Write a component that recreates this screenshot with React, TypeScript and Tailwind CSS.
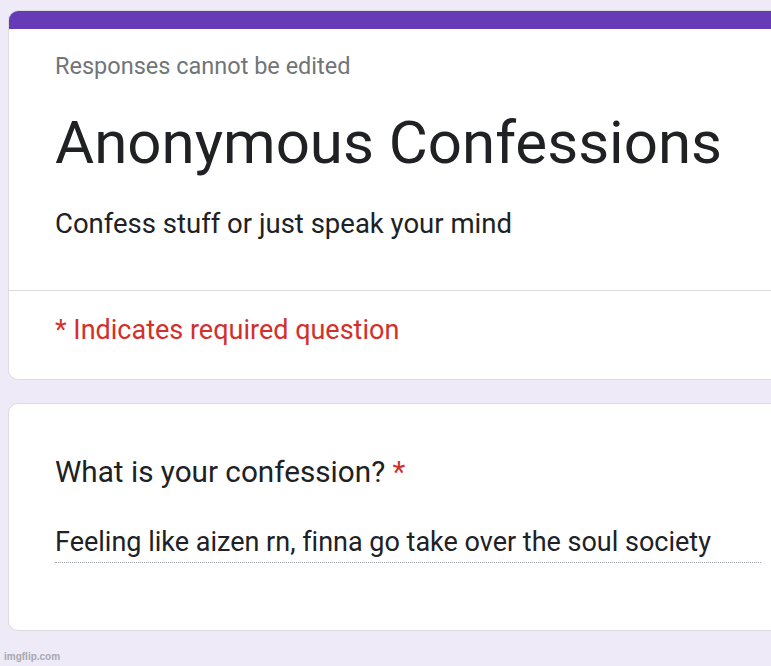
export default function App() {
  return (
    <div
      className="relative h-[666px] w-[771px] overflow-hidden bg-[#eeeaf8] pt-[10px] pl-[8px]"
      style={{ fontFamily: "Roboto, 'Liberation Sans', sans-serif" }}
    >
      {/* Header card */}
      <div className="w-[800px] overflow-hidden rounded-l-[10px] border border-[#dadce0] bg-white">
        <div className="h-[18px] bg-[#673ab7]" />
        <div className="px-[46px] pt-[22px]">
          <div className="text-[23.5px] leading-[30px] text-[#70757a]">Responses cannot be edited</div>
          <h1 className="mt-[28px] text-[60px] leading-[68px] text-[#202124]">Anonymous Confessions</h1>
          <div className="mt-[29px] pb-[48px] text-[27.5px] leading-[36px] text-[#202124]">
            Confess stuff or just speak your mind
          </div>
        </div>
        <div className="border-t border-[#dadce0] px-[46px] pt-[21px] pb-[31px]">
          <div className="text-[27px] leading-[36px] text-[#d3302a]">* Indicates required question</div>
        </div>
      </div>

      {/* Question card */}
      <div className="mt-[23px] h-[228px] w-[800px] rounded-l-[10px] border border-[#dadce0] bg-white px-[46px] pt-[48px]">
        <div className="text-[29.7px] leading-[40px] text-[#202124]">
          What is your confession? <span className="text-[#d3302a]">*</span>
        </div>
        <div className="mt-[32px] border-b border-dotted border-[#9aa0a6] pb-[2px] text-[27px] leading-[36px] text-[#202124] [font-variant-ligatures:none]">
          Feeling like aizen rn, finna go take over the soul society
        </div>
      </div>

      <div
        className="absolute bottom-[2px] left-[4px] text-[10px] font-bold text-[#a8a8ae]"
        style={{ fontFamily: "'Liberation Sans', Arial, sans-serif" }}
      >
        imgflip.com
      </div>
    </div>
  );
}
